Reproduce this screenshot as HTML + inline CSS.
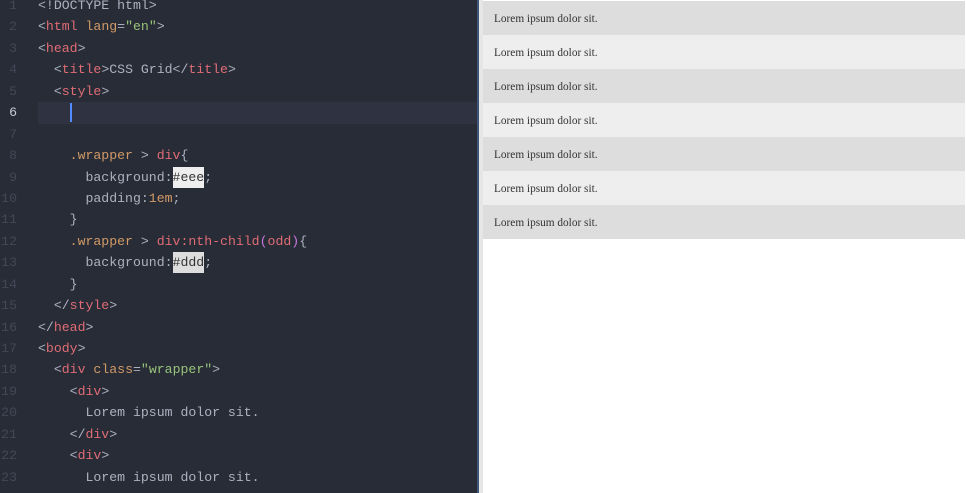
<!DOCTYPE html>
<html><head><style>
body{margin:0;width:966px;height:493px;overflow:hidden;background:#fff;position:relative}
#ed{position:absolute;left:0;top:0;width:477px;height:493px;background:#282c37;overflow:hidden}
#code{position:absolute;left:0;top:-5px;width:477px;font-family:"Liberation Mono",monospace;font-size:13.2px;line-height:21.45px;color:#abb2bf}
.l{position:relative;height:21.45px}
.n{position:absolute;left:0;width:17px;text-align:right;color:#434856}
.c{position:absolute;left:38px;white-space:pre}
.hl{position:absolute;left:38px;width:440px;top:0;height:21.45px;background:#2f3341}
.t{color:#e06c75}.a{color:#d19a66}.s{color:#98c379}.o{color:#d19a66}.p{color:#c678dd}
.sw1{background:#eee;color:#333;padding:3px 0}.sw2{background:#ddd;color:#333;padding:3px 0}
.cur{position:absolute;left:70px;top:1px;width:2px;height:19px;background:#528bff}
#sep{position:absolute;left:477px;top:0;width:2px;height:493px;background:#3d5577}
#gut{position:absolute;left:479px;top:0;width:4px;height:493px;background:#e6e6e8}
.r{position:absolute;left:483px;width:482px;height:34px;font-family:"Liberation Serif",serif;font-size:11.3px;color:#333;line-height:36px;text-indent:11px}
</style></head><body>
<div id="ed"><div id="code"><div class="l"><span class="n">1</span><span class="c">&lt;!DOCTYPE html&gt;</span></div><div class="l"><span class="n">2</span><span class="c">&lt;<span class="t">html</span> <span class="a">lang</span>=<span class="s">"en"</span>&gt;</span></div><div class="l"><span class="n">3</span><span class="c">&lt;<span class="t">head</span>&gt;</span></div><div class="l"><span class="n">4</span><span class="c">  &lt;<span class="t">title</span>&gt;CSS Grid&lt;/<span class="t">title</span>&gt;</span></div><div class="l"><span class="n">5</span><span class="c">  &lt;<span class="t">style</span>&gt;</span></div><div class="l"><div class="hl"></div><span class="n" style="color:#c8ccd4">6</span><div class="cur"></div></div><div class="l"><span class="n">7</span></div><div class="l"><span class="n">8</span><span class="c">    <span class="o">.wrapper</span> &gt; <span class="t">div</span>{</span></div><div class="l"><span class="n">9</span><span class="c">      background:<span class="sw1">#eee</span>;</span></div><div class="l"><span class="n">10</span><span class="c">      padding:<span class="o">1em</span>;</span></div><div class="l"><span class="n">11</span><span class="c">    }</span></div><div class="l"><span class="n">12</span><span class="c">    <span class="o">.wrapper</span> &gt; <span class="t">div:nth-child</span><span class="p">(</span><span class="t">odd</span><span class="p">)</span>{</span></div><div class="l"><span class="n">13</span><span class="c">      background:<span class="sw2">#ddd</span>;</span></div><div class="l"><span class="n">14</span><span class="c">    }</span></div><div class="l"><span class="n">15</span><span class="c">  &lt;/<span class="t">style</span>&gt;</span></div><div class="l"><span class="n">16</span><span class="c">&lt;/<span class="t">head</span>&gt;</span></div><div class="l"><span class="n">17</span><span class="c">&lt;<span class="t">body</span>&gt;</span></div><div class="l"><span class="n">18</span><span class="c">  &lt;<span class="t">div</span> <span class="a">class</span>=<span class="s">"wrapper"</span>&gt;</span></div><div class="l"><span class="n">19</span><span class="c">    &lt;<span class="t">div</span>&gt;</span></div><div class="l"><span class="n">20</span><span class="c">      Lorem ipsum dolor sit.</span></div><div class="l"><span class="n">21</span><span class="c">    &lt;/<span class="t">div</span>&gt;</span></div><div class="l"><span class="n">22</span><span class="c">    &lt;<span class="t">div</span>&gt;</span></div><div class="l"><span class="n">23</span><span class="c">      Lorem ipsum dolor sit.</span></div></div></div>
<div id="sep"></div><div id="gut"></div>
<div class="r" style="top:1px;background:#ddd">Lorem ipsum dolor sit.</div>
<div class="r" style="top:35px;background:#eee">Lorem ipsum dolor sit.</div>
<div class="r" style="top:69px;background:#ddd">Lorem ipsum dolor sit.</div>
<div class="r" style="top:103px;background:#eee">Lorem ipsum dolor sit.</div>
<div class="r" style="top:137px;background:#ddd">Lorem ipsum dolor sit.</div>
<div class="r" style="top:171px;background:#eee">Lorem ipsum dolor sit.</div>
<div class="r" style="top:205px;background:#ddd">Lorem ipsum dolor sit.</div>
</body></html>
